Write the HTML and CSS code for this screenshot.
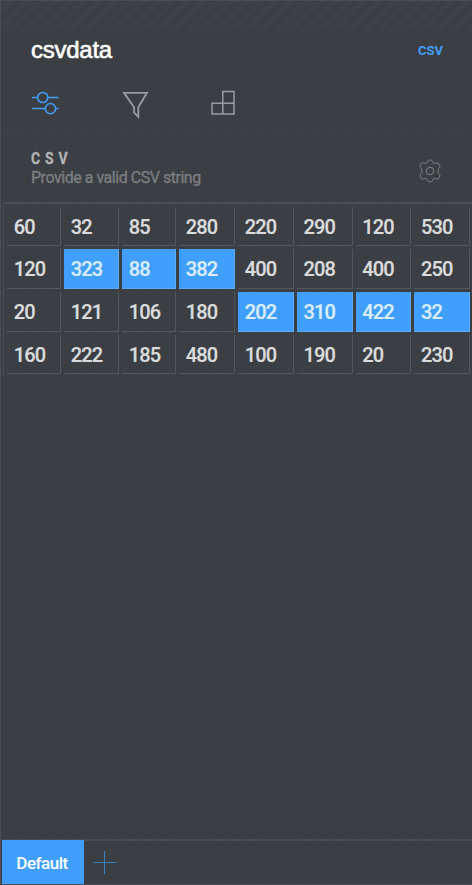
FILE: index.html
```
<!DOCTYPE html>
<html lang="en">
<head>
<meta charset="utf-8">
<title>csvdata</title>
<link rel="stylesheet" href="styles.css">
</head>
<body>
<main class="panel">
  <div class="grip"></div>
  <header class="head"><h1 class="title">csvdata</h1><span class="kind">CSV</span></header>
  <nav class="tools">
    <svg class="tool active" width="28" height="28" viewBox="0 0 28 28"><path d="M1 8.5h5.5M17 8.5h10.5M1 19.5h13M25 19.5h2.5"/><circle cx="11.7" cy="8.5" r="5.1"/><circle cx="19.5" cy="19.7" r="5.1"/></svg>
    <svg class="tool filter" width="28" height="30" viewBox="0 0 28 30"><path d="M2 3.8h23l-8.7 14.4v9.6l-4.2-4.2v-5.4z"/></svg>
    <svg class="tool blocks" width="26" height="28" viewBox="0 0 26 28"><path d="M2 14.2h22v10.9H2zM12.8 25.1V2.6H24v11.6"/></svg>
  </nav>
  <section class="field">
    <div>
      <h2 class="name">CSV</h2>
      <p class="hint">Provide a valid CSV string</p>
    </div>
    <svg class="gear" width="24" height="24" viewBox="0 0 24 24"><path d="M9.4 3.5Q9.7 1.2 10.7 1.2h2.6q1 0 1.3 2.3l1.8 1.1q2.7-1.2 3.6-.6.7.5 2 3 .4 1.1-1.6 2.7-.8 2.3 0 4.6 2 1.6 1.6 2.7-1.3 2.5-2 3-.9.6-3.6-.6l-1.8 1.1q-.3 2.3-1.3 2.3h-2.6q-1 0-1.3-2.3l-1.8-1.1q-2.7 1.2-3.6.6-.7-.5-2-3-.4-1.1 1.6-2.7.8-2.3 0-4.6-2-1.6-1.6-2.7 1.3-2.5 2-3 .9-.6 3.6.6z"/><circle cx="12" cy="12" r="3.8"/></svg>
  </section>
  <div class="sheet">
    <span>60</span><span>32</span><span>85</span><span>280</span><span>220</span><span>290</span><span>120</span><span>530</span>
    <span>120</span><span class="on">323</span><span class="on">88</span><span class="on">382</span><span>400</span><span>208</span><span>400</span><span>250</span>
    <span>20</span><span>121</span><span>106</span><span>180</span><span class="on">202</span><span class="on">310</span><span class="on">422</span><span class="on">32</span>
    <span>160</span><span>222</span><span>185</span><span>480</span><span>100</span><span>190</span><span>20</span><span>230</span>
  </div>
  <footer class="tabs">
    <button class="tab">Default</button>
    <svg class="plus" width="24" height="24" viewBox="0 0 24 24"><path d="M.5 12.5h23M11.5 1v23"/></svg>
  </footer>
</main>
</body>
</html>
```
FILE: styles.css
```
* { box-sizing: border-box; }
body { margin: 0; background: #3b3e42; font-family: Roboto, sans-serif; }
h1, h2, p { margin: 0; }
.panel {
  height: 885px;
  overflow: hidden;
  display: flex;
  flex-direction: column;
  border: 1px solid #4b4d52;
  border-right: 0;
  background: radial-gradient(circle, #404347 0.8px, transparent 1.3px) 0 3px / 14.7px 7.4px #3b3e42;
}
.grip {
  height: 29px;
  flex: none;
  background: repeating-linear-gradient(135deg, #3b3e42 0 4px, #3e4145 6px 9px, #3b3e42 10.4px);
}
.head {
  height: 50px;
  flex: none;
  display: flex;
  justify-content: space-between;
  padding: 6px 29px 0 30px;
}
.title {
  font: 400 24px/28px "Liberation Sans", sans-serif;
  letter-spacing: -0.25px;
  color: #fff;
  -webkit-text-stroke: 0.6px #fff;
}
.kind { font-size: 13px; font-weight: 700; line-height: 29px; letter-spacing: 0; color: #429ffb; }
.tools { height: 54px; flex: none; display: flex; align-items: flex-start; padding: 9px 0 0 30px; }
.tool { flex: none; fill: none; stroke: #999ca5; stroke-width: 1.5; }
.active { stroke: #429ffb; }
.filter { margin-left: 63px; stroke-width: 1.8; }
.blocks { margin-left: 60px; }
.field {
  height: 69px;
  flex: none;
  display: flex;
  justify-content: space-between;
  align-items: flex-start;
  padding: 14px 30px 0;
  border-top: 1px solid #3f4145;
}
.name {
  font-size: 17px;
  font-weight: 700;
  line-height: 18px;
  letter-spacing: 5.9px;
  color: #b2b4b6;
  -webkit-text-stroke: 0.3px #b2b4b6;
  transform: scaleX(0.82);
  transform-origin: left;
}
.hint { margin-top: 1px; font-size: 16px; font-weight: 400; line-height: 19px; letter-spacing: -0.47px; color: #7b7d81; -webkit-text-stroke: 0.35px #7b7d81; }
.gear { margin-top: 10px; fill: none; stroke: #7f8185; stroke-width: 1; }
.sheet {
  flex: none;
  display: grid;
  grid-template-columns: 54px 55px 54px 56px 55.75px 55.75px 55.75px 55.75px;
  grid-template-rows: 39px 40px 40px 39px;
  gap: 3px;
  margin: -1px 0 0 2px;
  padding: 3px 0 3px 3px;
  border-top: 2px solid #4b4d52;
  border-left: 1px solid #4b4d52;
}
.sheet span {
  padding-left: 6.7px;
  border-right: 1px solid #54565b;
  border-bottom: 1px solid #54565b;
  font-size: 20px;
  font-weight: 500;
  line-height: 41px;
  letter-spacing: -0.85px;
  color: #dadbdc;
  -webkit-text-stroke: 0.2px;
}
.sheet .on { background: #409ffc; border-color: #5babf8; color: #d8edff; }
.tabs {
  height: 45px;
  flex: none;
  display: flex;
  margin: auto 0 0 1px;
  border-top: 2px solid #4b4d52;
}
.tab {
  width: 82px;
  height: 45px;
  margin-top: -1px;
  padding: 0 2px 0 0;
  border: 0;
  background: #409ffc;
  color: #fff;
  font: 500 17px/46px Roboto, sans-serif;
  letter-spacing: -0.5px;
}
.plus { margin: 9px 0 0 9px; fill: none; stroke: #3980c2; stroke-width: 1; }
```
